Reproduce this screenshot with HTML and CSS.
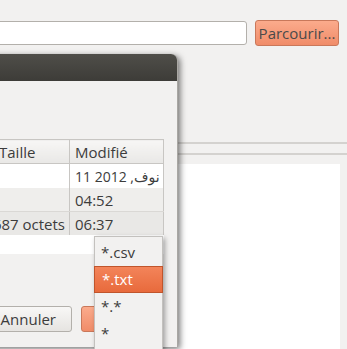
FILE: index.html
```html
<!DOCTYPE html>
<html lang="fr">
<head>
  <meta charset="UTF-8">
  <title>Parcourir</title>
  <link rel="stylesheet" href="styles.css">
</head>
<body>
  <div class="main">
    <div class="toolbar">
      <input class="path-entry" type="text" value="">
      <button class="browse-btn">Parcourir...</button>
    </div>
    <div class="pane-lines">
      <div class="line"></div>
      <div class="line"></div>
    </div>
    <div class="view"></div>
  </div>

  <!-- file chooser dialog -->
  <div class="dialog">
    <div class="titlebar"></div>
    <div class="dialog-body">
      <table class="files">
        <colgroup>
          <col class="c-size">
          <col class="c-date">
        </colgroup>
        <thead>
          <tr><th class="col-size">Taille</th><th class="col-date">Modifié</th></tr>
        </thead>
        <tbody>
          <tr class="row-a"><td class="col-size"></td><td class="col-date long-date">11 نوف, 2012</td></tr>
          <tr class="row-b"><td class="col-size"></td><td class="col-date">04:52</td></tr>
          <tr class="row-c"><td class="col-size num">687 octets</td><td class="col-date">06:37</td></tr>
        </tbody>
      </table>
      <div class="blank"></div>
      <div class="actions">
        <button class="btn">Annuler</button>
        <button class="btn btn-ok"></button>
      </div>
    </div>
  </div>

  <ul class="filter-menu">
    <li>*.csv</li>
    <li class="selected">*.txt</li>
    <li>*.*</li>
    <li>*</li>
  </ul>
</body>
</html>
```

FILE: styles.css
```css
/* General */
html, body {
  margin: 0;
  padding: 0;
  width: 347px;
  height: 349px;
  overflow: hidden;
}
body {
  position: relative;
  background: #f2f1f0;
  color: #3c3c3c;
  font-family: "Open Sans", "DejaVu Sans", sans-serif;
  font-size: 15px;
}

/* Main window behind */
.toolbar {
  display: flex;
  align-items: center;
  gap: 8px;
  padding-top: 20px;
  height: 26px;
}
.path-entry {
  margin-left: -12px;
  width: 259px;
  height: 24px;
  box-sizing: border-box;
  border: 1px solid #b3b0ab;
  border-radius: 3px;
  background: white;
}
.browse-btn {
  width: 84px;
  height: 26px;
  padding: 0;
  border: 1px solid #c9785a;
  border-radius: 3px;
  background: linear-gradient(#fbab8c, #f08c69);
  color: #4a4a4a;
  font-family: inherit;
  font-size: 15px;
}
.pane-lines {
  padding-top: 96px;
}
.line {
  height: 2px;
  background: #d4d2cf;
  margin-bottom: 9px;
}
.view {
  margin: 6px 7px 0 0;
  height: 200px;
  background: white;
}

/* Dialog */
.dialog {
  position: absolute;
  top: 54px;
  left: -200px;
  width: 377px;
  height: 293px;
  background: #f2f1f0;
  border-right: 1px solid #a9a7a3;
  border-radius: 0 6px 0 0;
  box-shadow: 2px 2px 6px rgba(0, 0, 0, 0.55);
  display: flex;
  flex-direction: column;
}
.titlebar {
  height: 27px;
  background: linear-gradient(#4f4e49, #3d3c38);
  border-radius: 0 6px 0 0;
}
.dialog-body {
  flex-grow: 1;
  display: flex;
  flex-direction: column;
  align-items: flex-end;
  padding: 58px 13px 0 0;
}
.files {
  table-layout: fixed;
  width: 363px;
  border-collapse: collapse;
  border: 1px solid #c8c6c3;
  border-bottom: none;
}
.c-size {
  width: 269px;
}
.c-date {
  width: 94px;
}
.files th, .files td {
  padding: 0 5px;
  height: 23px;
  text-align: left;
  font-weight: normal;
  white-space: nowrap;
  overflow: hidden;
}
.files th {
  height: 23px;
  background: linear-gradient(#f7f6f5, #e9e8e6);
  border-bottom: 1px solid #c8c6c3;
}
.files .col-size {
  border-right: 1px solid #c8c6c3;
}
.files th.col-size {
  padding-left: 198px;
}
.files .num {
  text-align: right;
  padding-right: 4px;
}
.files .long-date {
  padding-right: 0;
  font-size: 14px;
}
.row-a td {
  background: white;
  height: 24px;
}
.row-b td {
  background: #efeeec;
  border-bottom: 1px solid #dad8d5;
}
.row-c td {
  background: #e9e8e6;
}
.blank {
  width: 363px;
  height: 19px;
  background: white;
}
.actions {
  display: flex;
  gap: 9px;
  align-self: stretch;
  padding: 52px 0 0 192px;
}
.btn {
  width: 80px;
  height: 26px;
  padding: 0 15px 0 0;
  border: 1px solid #b3b0ab;
  border-radius: 3px;
  background: linear-gradient(#f8f7f6, #e6e4e1);
  color: #3c3c3c;
  font-family: inherit;
  font-size: 15px;
  text-align: right;
}
.btn-ok {
  border-color: #c9785a;
  background: linear-gradient(#fbab8c, #f08c69);
}

/* Filter popup menu */
.filter-menu {
  position: absolute;
  top: 236px;
  left: 94px;
  width: 69px;
  height: 120px;
  margin: 0;
  padding: 2px 0 0;
  list-style: none;
  box-sizing: border-box;
  background: #f2f1f0;
  border: 1px solid #c3c1be;
  box-shadow: 2px 2px 5px rgba(0, 0, 0, 0.35);
}
.filter-menu li {
  height: 27px;
  line-height: 27px;
  padding-left: 6px;
  color: #3c3c3c;
}
.filter-menu li.selected {
  margin: 0 -1px;
  padding-left: 7px;
  height: 25px;
  line-height: 25px;
  border: 1px solid #c0552c;
  background: linear-gradient(#f3845a, #e86a3c);
  color: white;
}
```
